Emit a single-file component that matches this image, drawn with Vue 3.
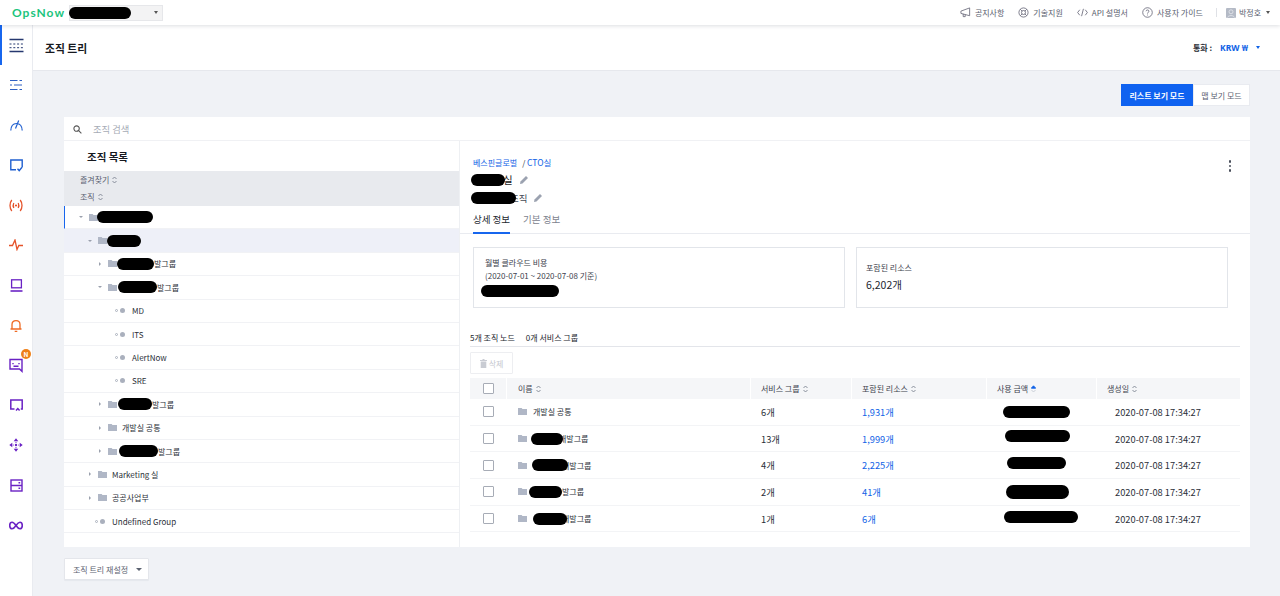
<script setup>
const treeRows = [
  { level: 0, kind: 'open', blob: 56, gap: -1, rowClass: 'marked' },
  { level: 1, kind: 'open', blob: 34, gap: 0, rowClass: 'selected' },
  { level: 2, kind: 'closed', blob: 37, gap: 0, label: '발그룹' },
  { level: 2, kind: 'open', blob: 39, gap: 1, label: '발그룹' },
  { level: 3, kind: 'leaf', label: 'MD' },
  { level: 3, kind: 'leaf', label: 'ITS' },
  { level: 3, kind: 'leaf', label: 'AlertNow' },
  { level: 3, kind: 'leaf', label: 'SRE' },
  { level: 2, kind: 'closed', blob: 34, gap: 1, label: '발그룹' },
  { level: 2, kind: 'closed', label: '개발실 공통', textGap: 5 },
  { level: 2, kind: 'closed', blob: 39, gap: 2, label: '발그룹' },
  { level: 1, kind: 'closed', label: 'Marketing 실', textGap: 5 },
  { level: 1, kind: 'closed', label: '공공사업부', textGap: 5 },
  { level: 1, kind: 'leaf', label: 'Undefined Group' }
]
const tableRows = [
  { name: '개발실 공통', groups: '6개', res: '1,931개', amount: 67, amountLeft: 6, shift: 0, amountH: 12 },
  { blob: 32, blobGap: 4, overlap: -4, name: '개발그룹', groups: '13개', res: '1,999개', amount: 65, amountLeft: 8, shift: -6, amountH: 12 },
  { blob: 36, blobGap: 5, overlap: -6, name: '개발그룹', groups: '4개', res: '2,225개', amount: 59, amountLeft: 10, shift: -4, amountH: 12 },
  { blob: 33, blobGap: 2, overlap: 0, name: '발그룹', groups: '2개', res: '41개', amount: 63, amountLeft: 9, shift: 0, amountH: 14 },
  { blob: 34, blobGap: 6, overlap: -5, name: '개발그룹', groups: '1개', res: '6개', amount: 74, amountLeft: 7, shift: -4, amountH: 12 }
]
const headers = ['이름', '서비스 그룹', '포함된 리소스', '사용 금액', '생성일']
</script>

<template>
  <div class="page">
    <header class="topbar">
      <div class="brand">OpsNow</div>
      <div class="account"><span class="blob account-blob"></span><span class="caret dark"></span></div>
      <nav class="toplinks">
        <span class="toplink">
          <svg width="11" height="11" viewBox="0 0 12 12" fill="none" stroke="#667" stroke-width=".9"><path d="M1 4.500 10.500 1v8.500L1 7zM3.500 7.500v3h2.200V8.400"/></svg>공지사항
        </span>
        <span class="toplink">
          <svg width="11" height="11" viewBox="0 0 12 12" fill="none" stroke="#667" stroke-width=".9"><circle cx="6" cy="6" r="5"/><circle cx="6" cy="6" r="2.200"/><path d="M2.500 2.500 4.400 4.400M9.500 2.500 7.600 4.400M2.500 9.500l1.900-1.900M9.500 9.500 7.600 7.600"/></svg>기술지원
        </span>
        <span class="toplink">
          <svg width="11" height="11" viewBox="0 0 12 12" fill="none" stroke="#667" stroke-width=".9"><path d="M3 3 .7 6 3 9M9 3l2.300 3L9 9M7 2 5 10"/></svg>API 설명서
        </span>
        <span class="toplink">
          <svg width="11" height="11" viewBox="0 0 12 12" fill="none" stroke="#667" stroke-width=".9"><circle cx="6" cy="6" r="5.200"/><path d="M4.400 4.600C4.500 2.800 7.600 2.800 7.600 4.600 7.600 5.800 6 5.800 6 7.200M6 8.300v.9"/></svg>사용자 가이드
        </span>
        <span class="divider"></span>
        <span class="user">
          <span class="avatar"><svg width="10" height="10" viewBox="0 0 10 10"><rect width="10" height="10" rx="1" fill="#b4bac6"/><circle cx="5" cy="3.800" r="2" fill="none" stroke="#e6e8ee" stroke-width=".8"/><path d="M1.600 9.500C2 7 8 7 8.400 9.500" fill="none" stroke="#e6e8ee" stroke-width=".8"/></svg></span>
          박정호<span class="caret dark"></span>
        </span>
      </nav>
    </header>

    <div class="shell">
      <aside class="rail">
        <div class="rail-item active">
          <svg width="15" height="15" viewBox="0 0 15 15" fill="none" stroke="#26386f" stroke-width="1"><path d="M.5 1.500h14M.5 13.500h14" stroke-width="1.500"/><path d="M.5 6h14M.5 9.700h14" stroke-dasharray="2 1.800"/></svg>
        </div>
        <div class="rail-item">
          <svg width="12" height="12" viewBox="0 0 12 12" fill="none" stroke="#2c5fc4" stroke-width="1.200"><path d="M0 1.500h7.500M9.500 1.500H12M0 6h2M4 6h8M0 10.500h7.500M9.500 10.500H12"/></svg>
        </div>
        <div class="rail-item">
          <svg width="13" height="11" viewBox="0 0 13 11" fill="none" stroke="#1f5fd0" stroke-width="1.200"><path d="M.8 10.500C1 6 3.500 3.500 6.500 3.500S12 6 12.200 10.500M5.500 8.500 8.700.6"/></svg>
        </div>
        <div class="rail-item">
          <svg width="13" height="13" viewBox="0 0 13 13" fill="none" stroke="#1f5fd0" stroke-width="1.400"><path d="M6 10.700H.8V1h11.400v7.500M7.500 9.800l1.700 1.800 2.600-3.100"/></svg>
        </div>
        <div class="rail-item">
          <svg width="14" height="13" viewBox="0 0 14 13" fill="none" stroke="#e5532b" stroke-width="1.300"><path d="M2.800 1C.4 4 .4 9 2.800 12M11.200 1c2.400 3 2.400 8 0 11M4.800 4C4 5.500 4 7.500 4.800 9M9.200 4c.8 1.500.8 3.500 0 5"/><circle cx="7" cy="6.500" r="1.100" fill="#e5532b" stroke="none"/></svg>
        </div>
        <div class="rail-item">
          <svg width="14" height="12" viewBox="0 0 14 12" fill="none" stroke="#e5532b" stroke-width="1.300"><path d="M0 6.500h3.500L6 1l2 9.500 1.800-4h4.200"/></svg>
        </div>
        <div class="rail-item">
          <svg width="13" height="13" viewBox="0 0 13 13" fill="none" stroke="#6a22c4" stroke-width="1.300"><rect x="1.600" y=".8" width="9.800" height="8"/><path d="M.5 12h12" stroke-width="1.600"/></svg>
        </div>
        <div class="rail-item">
          <svg width="12" height="13" viewBox="0 0 12 13" fill="none" stroke="#ef6a23" stroke-width="1.300"><path d="M.5 10h11M2 10V5.500c0-5.300 8-5.300 8 0V10M4.700 12.300h2.600"/></svg>
        </div>
        <div class="rail-item">
          <svg width="14" height="15" viewBox="0 0 14 15" fill="none" stroke="#6a22c4" stroke-width="1.400"><path d="M1 1.500h12v11.800l-2.500-2.300H1z"/><path d="M4 5v1.200M10 5v1.200M4.500 8.300h5"/></svg>
          <span class="badge">N</span>
        </div>
        <div class="rail-item">
          <svg width="13" height="13" viewBox="0 0 13 13" fill="none" stroke="#6a22c4" stroke-width="1.500"><path d="M4.500 10H.8V1h11.400v9h-1.400M6 11.500l1.800-2 1.800 2"/></svg>
        </div>
        <div class="rail-item">
          <svg width="14" height="14" viewBox="0 0 14 14" fill="#6a22c4"><path d="M7 .3 9.300 3.300H4.700zM7 13.700 4.700 10.700h4.600zM.3 7l3-2.300v4.600zM13.700 7l-3 2.300V4.700z"/><circle cx="7" cy="7" r="1.200"/><circle cx="7" cy="4.300" r=".6"/><circle cx="7" cy="9.700" r=".6"/><circle cx="4.300" cy="7" r=".6"/><circle cx="9.700" cy="7" r=".6"/></svg>
        </div>
        <div class="rail-item">
          <svg width="13" height="13" viewBox="0 0 13 13" fill="none" stroke="#6a22c4" stroke-width="1.400"><rect x="1" y="1" width="11" height="11"/><path d="M1 6.500h11M8.500 3.800h1.700M8.500 9.200h1.700"/></svg>
        </div>
        <div class="rail-item">
          <svg width="14" height="9" viewBox="0 0 15 9" fill="none" stroke="#6a22c4" stroke-width="1.700"><path d="M7.500 4.500C5.500 1.500 4.500 1 3.300 1 1.800 1 .8 2.600.8 4.500S1.800 8 3.300 8C4.500 8 5.500 7.500 7.500 4.500c2-3 3-3.500 4.200-3.500 1.500 0 2.500 1.600 2.500 3.500S13.200 8 11.700 8C10.500 8 9.500 7.500 7.500 4.500z"/></svg>
        </div>
      </aside>

      <main class="main">
        <div class="titlebar">
          <h1>조직 트리</h1>
          <div class="currency">
            <span class="cur-label">통화 :</span><span class="cur-value">KRW ₩</span><span class="caret blue"></span>
          </div>
        </div>

        <div class="content">
          <div class="modes">
            <button class="mode on">리스트 보기 모드</button><button class="mode">맵 보기 모드</button>
          </div>

          <section class="card">
            <div class="search">
              <svg width="9" height="9" viewBox="0 0 10 10" fill="none" stroke="#555" stroke-width="1.200"><circle cx="4" cy="4" r="3"/><path d="m6.300 6.300 3 3"/></svg>
              <span>조직 검색</span>
            </div>

            <div class="split">
              <div class="left">
                <h2>조직 목록</h2>
                <div class="sorts">
                  <div>즐겨찾기<svg class="sort" width="5" height="8" viewBox="0 0 5 8" fill="none" stroke="#7d8391" stroke-width=".9"><path d="M.5 3 2.500 1 4.500 3M.5 5l2 2 2-2"/></svg></div>
                  <div>조직<svg class="sort" width="5" height="8" viewBox="0 0 5 8" fill="none" stroke="#7d8391" stroke-width=".9"><path d="M.5 3 2.500 1 4.500 3M.5 5l2 2 2-2"/></svg></div>
                </div>
                <div
                  v-for="(row, i) in treeRows"
                  :key="i"
                  class="tree-row"
                  :class="row.rowClass"
                  :style="{ paddingLeft: 14 + row.level * 10 + 'px' }"
                >
                  <span v-if="row.kind === 'leaf'" class="leaf"><i></i><b></b></span>
                  <template v-else>
                    <span class="arrow" :class="row.kind"></span>
                    <svg class="folder" width="9" height="7" viewBox="0 0 10 8" preserveAspectRatio="none"><path d="M0 0h4l1 1h5v7H0z" fill="#b0b7c6"/></svg>
                  </template>
                  <span v-if="row.blob" class="blob tree-blob" :style="{ width: row.blob + 'px', marginLeft: (row.gap || 0) + 'px' }"></span>
                  <span v-if="row.label" class="tree-label" :style="{ marginLeft: row.textGap ? row.textGap + 'px' : null }">{{ row.label }}</span>
                </div>
              </div>

              <div class="right">
                <div class="detail-head">
                  <div class="crumb"><a>베스핀글로벌</a><span class="slash">/ </span><a class="cto">CTO실</a></div>
                  <div class="dots"><i></i><i></i><i></i></div>
                  <div class="name-line big">
                    <span class="blob name-blob"></span><span class="name-text">실</span>
                    <svg class="pen" width="10" height="10" viewBox="0 0 10 10"><path d="m1 9 .5-2.500L7 1l2 2-5.500 5.500z" fill="#9ba2b0"/></svg>
                  </div>
                  <div class="name-line">
                    <span class="blob sub-blob"></span><span class="sub-text">조직</span>
                    <svg class="pen" width="10" height="10" viewBox="0 0 10 10"><path d="m1 9 .5-2.500L7 1l2 2-5.500 5.500z" fill="#9ba2b0"/></svg>
                  </div>
                </div>
                <div class="tabs">
                  <span class="tab on">상세 정보</span><span class="tab">기본 정보</span>
                </div>

                <div class="stats">
                  <div class="stat">
                    <p>월별 클라우드 비용<br>(2020-07-01 ~ 2020-07-08 기준)</p>
                    <span class="blob stat-blob"></span>
                  </div>
                  <div class="stat second">
                    <p>포함된 리소스</p>
                    <strong>6,202개</strong>
                  </div>
                </div>

                <div class="table-zone">
                  <div class="counts"><span>5개 조직 노드</span><span>0개 서비스 그룹</span></div>
                  <button class="delete">
                    <svg width="7" height="9" viewBox="0 0 7 9" fill="#c9ccd3"><path d="M0 1h7v1H0zM2.500 0h2v1h-2zM.7 2.500h5.600V9H.7z"/></svg>삭제
                  </button>
                  <div class="grid head">
                    <div class="cell check"><span class="box"></span></div>
                    <div v-for="(h, i) in headers" :key="h" class="cell" :class="{ first: i === 0, last: i === 4 }">
                      {{ h }}
                      <svg class="sort" width="5" height="8" viewBox="0 0 5 8" fill="none" stroke="#7d8391" stroke-width=".9">
                        <path v-if="i === 3" d="M.3 3.200 2.500 .8 4.700 3.200z" fill="#0f62e6" stroke="#0f62e6"/>
                        <path v-else d="M.5 3 2.500 1 4.500 3"/>
                        <path d="M.5 5l2 2 2-2" :stroke="i === 3 ? '#c5c9d2' : '#7d8391'"/>
                      </svg>
                    </div>
                  </div>
                  <div v-for="(r, i) in tableRows" :key="i" class="grid line">
                    <div class="cell check"><span class="box"></span></div>
                    <div class="cell first">
                      <svg class="folder-t" width="9" height="7" viewBox="0 0 10 8" preserveAspectRatio="none"><path d="M0 0h4l1 1h5v7H0z" fill="#b0b7c6"/></svg>
                      <span v-if="r.blob" class="blob row-blob" :style="{ width: r.blob + 'px', marginLeft: r.blobGap + 'px' }"></span>
                      <span :class="{ 'row-name': !r.blob }" :style="{ marginLeft: r.blob ? r.overlap + 'px' : null }">{{ r.name }}</span>
                    </div>
                    <div class="cell">{{ r.groups }}</div>
                    <div class="cell link">{{ r.res }}</div>
                    <div class="cell"><span class="blob amount-blob" :style="{ width: r.amount + 'px', height: r.amountH + 'px', marginLeft: r.amountLeft + 'px', marginTop: r.shift + 'px' }"></span></div>
                    <div class="cell date">2020-07-08 17:34:27</div>
                  </div>
                </div>
              </div>
            </div>
          </section>

          <button class="reset">조직 트리 재설정<span class="caret big"></span></button>
        </div>
      </main>
    </div>
  </div>
</template>

<style>
html, body { margin: 0; background: #f0f2f6; }
</style>

<style scoped>
.page { width: 1280px; height: 596px; overflow: hidden; display: flex; flex-direction: column; font-family: "Noto Sans CJK KR", "Noto Sans", sans-serif; font-size: 8px; color: #2b2f38; background: #f0f2f6; }
.blob { display: inline-block; background: #000; border-radius: 7px; flex: none; position: relative; z-index: 1; }
.caret { display: inline-block; width: 0; height: 0; border: 2.500px solid transparent; border-top: 3px solid #555; border-bottom: 0; }
.caret.blue { border-top-color: #0f62e6; }
.caret.big { border-width: 3px; border-top-width: 3px; border-bottom: 0; border-top-color: #5b6270; }

.topbar { height: 25px; flex: none; display: flex; align-items: center; background: #fff; box-shadow: 0 1px 4px rgba(40, 50, 70, .16); position: relative; z-index: 2; padding-left: 12px; }
.brand { width: 57px; font-family: Lato, "Noto Sans", sans-serif; font-weight: 700; font-size: 12px; letter-spacing: 1px; color: #1bc47d; }
.account { width: 94px; height: 16px; box-sizing: border-box; background: #f3f3f4; border: 1px solid #e6e7ea; display: flex; align-items: center; padding-right: 4px; justify-content: space-between; }
.account-blob { width: 62px; height: 12px; margin-left: -1px; }
.toplinks { margin-left: auto; display: flex; align-items: center; color: #5b6270; }
.toplink { display: flex; align-items: center; gap: 4px; margin-right: 14px; white-space: nowrap; }
.divider { width: 1px; height: 9px; background: #dfe1e6; margin: 0 9px 0 -1px; }
.user { display: flex; align-items: center; margin-right: 10px; white-space: nowrap; }
.avatar { display: flex; margin-right: 3px; }
.user .caret { margin-left: 5px; }

.shell { flex: 1; display: flex; min-height: 0; }
.rail { width: 33px; flex: none; box-sizing: border-box; background: #fff; border-right: 1px solid #e9ebf0; }
.rail-item { height: 40px; display: flex; align-items: center; justify-content: center; position: relative; box-sizing: border-box; }
.rail-item.active { border-left: 2px solid #1766ee; padding-right: 2px; }
.badge { position: absolute; top: 4px; left: 21px; width: 10px; height: 10px; border-radius: 50%; background: #ef8019; color: #fff; font-size: 6.500px; font-weight: 700; line-height: 10px; text-align: center; }

.main { flex: 1; display: flex; flex-direction: column; min-width: 0; }
.titlebar { height: 46px; flex: none; box-sizing: border-box; background: #fff; border-bottom: 1px solid #e6e8ed; display: flex; align-items: center; justify-content: space-between; padding: 0 20px 0 12px; }
h1 { margin: 0; font-size: 10.800px; font-weight: 700; color: #17191f; }
.currency { display: flex; align-items: center; font-weight: 700; color: #2b2f38; }
.cur-label { margin-right: 8px; }
.cur-value { color: #0f62e6; margin-right: 8px; font-family: "Noto Sans", sans-serif; font-size: 8.500px; }

.content { flex: 1; padding: 13px 30px 0 31px; }
.modes { display: flex; justify-content: flex-end; height: 22px; }
button { font-family: inherit; font-size: 8px; margin: 0; padding: 0; cursor: pointer; }
.mode { width: 57px; background: #fff; border: 1px solid #e9ebf0; color: #5b6270; }
.mode.on { width: 72px; background: #0f62f0; border-color: #0f62f0; color: #fff; font-weight: 700; }

.card { margin-top: 11px; height: 430px; background: #fff; display: flex; flex-direction: column; }
.search { height: 24px; flex: none; box-sizing: border-box; border-bottom: 1px solid #f0f1f4; display: flex; align-items: center; padding: 1px 0 0 9px; color: #a6abb6; font-size: 9.300px; }
.search span { margin-left: 11px; }
.split { flex: 1; display: flex; min-height: 0; }

.left { width: 396px; flex: none; box-sizing: border-box; border-right: 1px solid #eef0f3; }
h2 { margin: 0; height: 30px; line-height: 32px; padding-left: 23px; font-size: 10.500px; font-weight: 700; color: #17191f; }
.sorts { height: 35px; box-sizing: border-box; padding: 0 0 2px 16px; background: #e8eaee; color: #596070; display: flex; flex-direction: column; justify-content: center; gap: 4px; line-height: 13px; }
.sort { margin-left: 3px; flex: none; vertical-align: -1px; }
.tree-row { height: 23.400px; box-sizing: border-box; display: flex; align-items: center; border-bottom: 1.500px solid #f1f2f5; white-space: nowrap; color: #2b2f38; }
.tree-row.marked { border-left: 1px solid #1766ee; }
.tree-row.selected { background: #eef0f8; }
.arrow { width: 10px; flex: none; display: flex; }
.arrow::before { content: ""; border: 2px solid transparent; }
.arrow.open::before { border-top: 2.500px solid #9aa0ad; border-bottom: 0; }
.arrow.closed::before { border-left: 2.500px solid #9aa0ad; border-right: 0; margin-left: 1px; }
.folder { flex: none; }
.tree-blob { height: 12px; }
.leaf { width: 17px; margin-left: 7px; display: flex; align-items: center; flex: none; }
.leaf i { width: 3px; height: 3px; box-sizing: border-box; border: 1px solid #aab0bd; border-radius: 50%; margin-right: 2px; }
.leaf b { width: 5px; height: 5px; background: #aab0bd; border-radius: 50%; }

.right { flex: 1; min-width: 0; }
.detail-head { padding: 14px 0 0 13px; box-sizing: border-box; position: relative; height: 70px; }
.crumb { line-height: 14px; }
.crumb a { color: #0f62e6; }
.slash { margin-left: 5px; }
.cto { font-size: 8.500px; }
.dots { position: absolute; top: 19px; right: 19px; display: flex; flex-direction: column; gap: 2px; }
.dots i { width: 2.500px; height: 2.500px; border-radius: 50%; background: #4a4f5b; }
.name-line { display: flex; align-items: center; height: 17px; margin-left: -2px; font-size: 9.500px; color: #444a56; }
.name-line.big { height: 19px; font-size: 10.500px; color: #222; }
.name-blob { width: 34px; height: 12px; }
.name-text { margin-left: -2px; }
.sub-blob { width: 45px; height: 12px; }
.sub-text { margin-left: -6px; }
.pen { margin-left: 6px; }
.tabs { height: 28px; box-sizing: border-box; border-bottom: 1px solid #e9ebf0; padding-left: 13px; display: flex; gap: 13px; margin-top: -5px; }
.tab { height: 28px; box-sizing: border-box; font-size: 9.500px; line-height: 26px; color: #7c828e; }
.tab.on { color: #23272f; border-bottom: 2px solid #1766ee; }
.stats { display: flex; gap: 11px; padding: 13px 0 0 13px; }
.stat { width: 372px; height: 61px; box-sizing: border-box; border: 1px solid #e2e5ea; padding: 9px 11px; color: #3c414c; }
.stat.second { padding: 14px 9px; }
.stat p { margin: 0; line-height: 12.500px; }
.stat strong { display: block; font-weight: 400; font-size: 10.500px; color: #23272f; line-height: 20px; }
.stat-blob { width: 78px; height: 12px; margin: 3px 0 0 -4px; display: block; }

.table-zone { padding: 21px 10px 0 10px; }
.counts { height: 17px; border-bottom: 1px solid #e3e5ea; display: flex; gap: 11px; color: #22262e; line-height: 17px; }
.delete { display: flex; align-items: center; gap: 2px; justify-content: center; margin-top: 5px; width: 43px; height: 22px; border: 1px solid #edeef1; background: #fff; color: #c5c8d0; border-radius: 1px; }
.grid { display: grid; grid-template-columns: 36px 244px 101px 135px 110px 144px; }
.head { margin-top: 4px; height: 21px; background: #f5f6f8; color: #3d424d; }
.head .cell { border-left: 1px solid #fff; padding-left: 10px; }
.head .cell.first { padding-left: 11px; }
.head .cell.check { border-left: 0; padding-left: 0; }
.line { height: 26.700px; border-bottom: 1.500px solid #f3f4f6; box-sizing: border-box; font-size: 9.300px; color: #2b2f38; }
.cell { display: flex; align-items: center; white-space: nowrap; min-width: 0; padding-left: 11px; }
.cell.check { justify-content: center; padding-left: 0; }
.line .first { padding-left: 12px; font-size: 8px; }
.row-name { margin-left: 6px; }
.row-blob { height: 12px; }
.box { width: 11px; height: 11px; box-sizing: border-box; border: 1px solid #a7acb6; border-radius: 1px; background: #fff; }
.link { color: #0f62e6; }
.date { padding-left: 19px; }

.reset { margin-top: 11px; width: 85px; height: 22px; display: flex; align-items: center; padding-left: 8px; gap: 8px; box-sizing: border-box; background: #fff; border: 1px solid #e4e6eb; color: #5b6270; border-radius: 1px; box-shadow: 0 1px 1px rgba(40, 50, 70, .05); }
</style>
